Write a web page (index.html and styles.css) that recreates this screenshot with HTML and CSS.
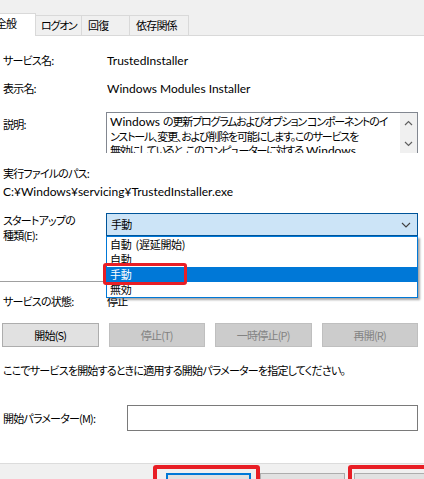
FILE: index.html
```html
<!DOCTYPE html>
<html lang="ja">
<head>
<meta charset="utf-8">
<title>TrustedInstaller のプロパティ</title>
<link rel="stylesheet" href="styles.css">
</head>
<body>
<div class="dialog">
  <div class="tabstrip">
    <div class="tab active">全般</div>
    <div class="tab tab-logon">ログオン</div>
    <div class="tab tab-recovery">回復</div>
    <div class="tab tab-deps">依存関係</div>
  </div>

  <div class="page">
    <div class="row row-name">
      <span class="label">サービス名:</span>
      <span class="lat">TrustedInstaller</span>
    </div>
    <div class="row row-display">
      <span class="label">表示名:</span>
      <span class="lat">Windows Modules Installer</span>
    </div>
    <div class="row row-desc">
      <span class="label label-desc">説明:</span>
      <div class="descbox">
        <div class="desctext">
          <div><span class="lat">Windows </span>の更新プログラムおよびオプション コンポーネントのイ</div>
          <div>ンストール、変更、および削除を可能にします。このサービスを</div>
          <div>無効にしていると、このコンピューターに対する<span class="lat"> Windows</span></div>
        </div>
        <div class="vscroll">
          <svg class="arrow" width="9" height="6" viewBox="0 0 9 6"><polyline points="1,5 4.5,1.5 8,5" fill="none" stroke="#606060" stroke-width="1.2"/></svg>
          <svg class="arrow" width="9" height="6" viewBox="0 0 9 6"><polyline points="1,1 4.5,4.5 8,1" fill="none" stroke="#606060" stroke-width="1.2"/></svg>
        </div>
      </div>
    </div>

    <div class="pathlabel">実行ファイルのパス:</div>
    <div class="pathvalue lat">C:¥Windows¥servicing¥TrustedInstaller.exe</div>

    <div class="row row-startup">
      <span class="label">スタートアップの<br>種類(E):</span>
      <div class="combo">
        <div class="combo-field">
          <span>手動</span>
          <svg width="10" height="6" viewBox="0 0 10 6"><polyline points="1,1 5,5 9,1" fill="none" stroke="#404040" stroke-width="1.1"/></svg>
        </div>
        <ul class="combo-list">
          <li>自動 (遅延開始)</li>
          <li>自動</li>
          <li class="selected">手動</li>
          <li>無効</li>
        </ul>
        <div class="mark mark-option"></div>
      </div>
    </div>

    <div class="separator"></div>

    <div class="row row-status">
      <span class="label">サービスの状態:</span>
      <span class="value">停止</span>
    </div>

    <div class="buttons">
      <button class="btn">開始(S)</button>
      <button class="btn" disabled>停止(T)</button>
      <button class="btn" disabled>一時停止(P)</button>
      <button class="btn" disabled>再開(R)</button>
    </div>

    <p class="note">ここでサービスを開始するときに適用する開始パラメーターを指定してください。</p>

    <div class="row row-param">
      <span class="label">開始パラメーター(M):</span>
      <div class="input"></div>
    </div>
  </div>

  <div class="footer">
    <button class="btn btn-default">OK</button>
    <button class="btn">キャンセル</button>
    <button class="btn">適用(A)</button>
    <div class="mark mark-ok"></div>
    <div class="mark mark-apply"></div>
  </div>
</div>
</body>
</html>
```

FILE: styles.css
```css
* { box-sizing: border-box; }

html, body {
  margin: 0;
  padding: 0;
}

body {
  width: 424px;
  height: 479px;
  overflow: hidden;
  background: #ffffff;
  color: #000000;
  font-family: "Noto Sans CJK JP", "Noto Sans", sans-serif;
  font-weight: 400;
  font-size: 11px;
  line-height: 15px;
  letter-spacing: -0.8px;
  font-feature-settings: "palt";
}

/* Latin runs use the full UI size without tightening */
.lat {
  font-family: Lato, "Noto Sans", sans-serif;
  font-size: 12px;
  letter-spacing: 0;
}

.dialog {
  width: 424px;
  height: 479px;
  display: flex;
  flex-direction: column;
}

/* tab strip */
.tabstrip {
  height: 36px;
  flex: none;
  background: #f0f0f0;
  border-bottom: 1px solid #d9d9d9;
  display: flex;
  align-items: flex-end;
}

.tab {
  height: 20px;
  padding: 2px 0 0 6px;
  border-top: 1px solid #d9d9d9;
  border-right: 1px solid #d9d9d9;
  white-space: nowrap;
  color: #000;
}

.tab.active {
  position: relative;
  z-index: 1;
  height: 23px;
  margin-bottom: -1px;
  margin-left: -24px;
  width: 60px;
  padding-left: 0;
  text-align: center;
  background: #ffffff;
  border-left: 1px solid #d9d9d9;
}

.tab-logon { width: 46px; padding-left: 5px; letter-spacing: -1.3px; }
.tab-recovery { width: 48px; }
.tab-deps { width: 59px; }

/* property page */
.page {
  flex: 1;
  padding: 17px 6px 0 3px;
}

.row {
  display: grid;
  grid-template-columns: 104px 1fr;
  white-space: nowrap;
}

.row-display { margin-top: 13px; }

.row-desc { margin-top: 16px; }

.label-desc { padding-top: 5px; }

.descbox {
  margin-left: -1px;
  height: 41px;
  border: 1px solid #828790;
  border-bottom: none;
  display: flex;
  overflow: hidden;
}

.desctext {
  flex: 1;
  padding: 1px 0 0 3px;
  line-height: 14px;
  letter-spacing: -1.2px;
  overflow: hidden;
}

.vscroll {
  width: 17px;
  flex: none;
  background: #f0f0f0;
  display: flex;
  flex-direction: column;
  align-items: center;
  padding-top: 7px;
  gap: 15px;
}

.arrow { display: block; }

.pathlabel { margin-top: 13px; }

.pathvalue {
  display: block;
  margin-top: 3px;
  white-space: nowrap;
}

.row-startup { margin-top: 14px; }

.combo {
  position: relative;
  margin-left: -1px;
  align-self: start;
}

.combo-field {
  height: 23px;
  border: 1px solid #005499;
  background: #cce4f7;
  padding: 0 6px 0 4px;
  line-height: 21px;
  display: flex;
  align-items: center;
  justify-content: space-between;
}

.combo-list {
  position: absolute;
  top: 100%;
  left: 0;
  right: 0;
  z-index: 2;
  margin: 0;
  padding: 0;
  list-style: none;
  background: #ffffff;
  border: 1px solid #0078d7;
  box-shadow: 2px 2px 2px rgba(0, 0, 0, 0.35);
}

.combo-list li {
  height: 15px;
  line-height: 15px;
  padding-left: 3px;
  letter-spacing: -0.3px;
  word-spacing: 2px;
}

.combo-list li.selected {
  background: #0078d7;
  color: #ffffff;
}

/* red callout frames */
.mark {
  position: absolute;
  z-index: 3;
  border: 3px solid #e81e25;
  border-radius: 3px;
}

.mark-option {
  left: -3px;
  top: 50px;
  width: 84px;
  height: 22px;
}

.separator {
  margin: 38px 0 0 -3px;
  height: 1px;
  background: #a0a0a0;
}

.row-status { margin-top: 12px; }

.buttons {
  margin: 14px 0 0 -1px;
  display: grid;
  grid-template-columns: repeat(4, 1fr);
  gap: 10px;
}

.btn {
  height: 24px;
  margin: 0;
  padding: 0;
  font: inherit;
  letter-spacing: inherit;
  font-feature-settings: "palt";
  color: #000;
  background: #e1e1e1;
  border: 1px solid #adadad;
}

.btn:disabled {
  background: #cccccc;
  border-color: #bfbfbf;
  color: #838383;
}

.note {
  margin: 16px 0 0;
  white-space: nowrap;
}

.row-param {
  margin-top: 27px;
  grid-template-columns: 124px 1fr;
  align-items: center;
}

.input {
  height: 26px;
  border: 1px solid #7a7a7a;
  background: #fff;
}

/* dialog button bar */
.footer {
  position: relative;
  height: 16px;
  flex: none;
  background: #f0f0f0;
  border-top: 1px solid #dcdcdc;
  display: flex;
  gap: 9px;
  padding: 9px 0 0 166px;
  overflow: hidden;
}

.footer .btn {
  flex: none;
  width: 85px;
  height: 23px;
}

.footer .btn-default {
  border: 2px solid #0078d7;
}

.mark-ok {
  left: 153px;
  top: 1px;
  width: 107px;
  height: 30px;
  border-width: 4px;
}

.mark-apply {
  left: 348px;
  top: 1px;
  width: 90px;
  height: 30px;
  border-width: 4px;
}
```
